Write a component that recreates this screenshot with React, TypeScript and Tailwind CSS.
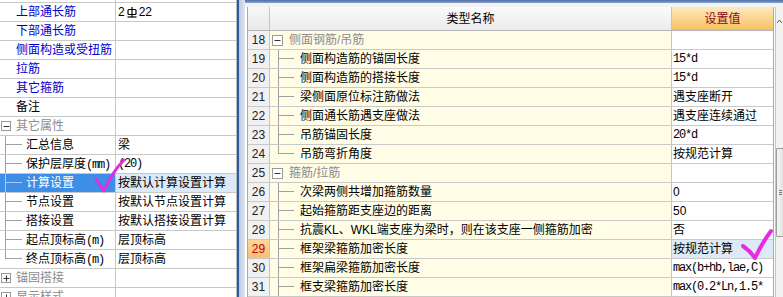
import React from 'react';

type LeftRow = {
  label: string;
  unit?: string;
  value?: string;
  kind: 'blue' | 'plain' | 'section' | 'child';
  open?: boolean;
  last?: boolean;
  selected?: boolean;
  rebar?: boolean;
};

type RightRow = {
  no: number;
  label: string;
  value?: string;
  mono?: boolean;
  section?: boolean;
  last?: boolean;
  selected?: boolean;
};

const leftRows: LeftRow[] = [
  { label: '上部通长筋', kind: 'blue', rebar: true },
  { label: '下部通长筋', kind: 'blue' },
  { label: '侧面构造或受扭筋', kind: 'blue' },
  { label: '拉筋', kind: 'blue' },
  { label: '其它箍筋', kind: 'blue' },
  { label: '备注', kind: 'plain' },
  { label: '其它属性', kind: 'section', open: true },
  { label: '汇总信息', value: '梁', kind: 'child' },
  { label: '保护层厚度', unit: '(mm)', value: '(20)', kind: 'child' },
  { label: '计算设置', value: '按默认计算设置计算', kind: 'child', selected: true },
  { label: '节点设置', value: '按默认节点设置计算', kind: 'child' },
  { label: '搭接设置', value: '按默认搭接设置计算', kind: 'child' },
  { label: '起点顶标高', unit: '(m)', value: '层顶标高', kind: 'child' },
  { label: '终点顶标高', unit: '(m)', value: '层顶标高', kind: 'child', last: true },
  { label: '锚固搭接', kind: 'section', open: false },
  { label: '显示样式', kind: 'section', open: false },
];

const rightRows: RightRow[] = [
  { no: 18, label: '侧面钢筋/吊筋', section: true },
  { no: 19, label: '侧面构造筋的锚固长度', value: '15*d', mono: true },
  { no: 20, label: '侧面构造筋的搭接长度', value: '15*d', mono: true },
  { no: 21, label: '梁侧面原位标注筋做法', value: '遇支座断开' },
  { no: 22, label: '侧面通长筋遇支座做法', value: '遇支座连续通过' },
  { no: 23, label: '吊筋锚固长度', value: '20*d', mono: true },
  { no: 24, label: '吊筋弯折角度', value: '按规范计算', last: true },
  { no: 25, label: '箍筋/拉筋', section: true },
  { no: 26, label: '次梁两侧共增加箍筋数量', value: '0' },
  { no: 27, label: '起始箍筋距支座边的距离', value: '50' },
  { no: 28, label: '抗震KL、WKL端支座为梁时，则在该支座一侧箍筋加密', value: '否' },
  { no: 29, label: '框架梁箍筋加密长度', value: '按规范计算', selected: true },
  { no: 30, label: '框架扁梁箍筋加密长度', value: 'max(b+hb,lae,C)', mono: true },
  { no: 31, label: '框支梁箍筋加密长度', value: 'max(0.2*Ln,1.5*', mono: true },
];

const mono = "font-['Liberation_Mono','Noto_Sans_CJK_SC',monospace] tracking-[-1.2px]";

const TreeBox = ({ open, size }: { open: boolean; size: string }) => (
  <span className={`${size} shrink-0 border border-[#9a9a9a] bg-white flex items-center justify-center`}>
    <svg width="7" height="7" viewBox="0 0 7 7">
      <line x1="0.5" y1="3.5" x2="6.5" y2="3.5" stroke="#333" strokeWidth="1" />
      {!open && <line x1="3.5" y1="0.5" x2="3.5" y2="6.5" stroke="#333" strokeWidth="1" />}
    </svg>
  </span>
);

const Connector = ({ last, width, light }: { last?: boolean; width: string; light?: boolean }) => {
  const c = light ? 'border-[#a9c9f2]' : 'border-[#a0a0a0]';
  return (
    <span className={`${width} self-stretch flex flex-col shrink-0`}>
      <span className={`h-[9px] border-l border-b ${c}`} />
      <span className={`flex-1 ${last ? '' : `border-l ${c}`}`} />
    </span>
  );
};

const RebarMark = () => (
  <svg width="10" height="12" viewBox="0 0 10 12" className="mx-[2px] inline-block">
    <line x1="5" y1="1" x2="5" y2="11" stroke="#000" strokeWidth="1.2" />
    <rect x="1" y="3.5" width="8" height="5" rx="1" fill="none" stroke="#000" strokeWidth="1.2" />
    <line x1="0.5" y1="11" x2="9.5" y2="11" stroke="#000" strokeWidth="1.2" />
  </svg>
);

function LeftPanel() {
  return (
    <div className="w-[237px] shrink-0 bg-white border-r border-[#b8b8b8] flex flex-col">
      <div className="h-[3px] border-b border-[#c8c8c8] flex shrink-0">
        <div className="w-[116px] border-r border-[#c8c8c8]" />
      </div>
      {leftRows.map((r) => {
        const labelColor =
          r.kind === 'blue' ? 'text-[#0000d0]' : r.kind === 'section' ? 'text-[#8c8c8c]' : 'text-black';
        return (
          <div key={r.label} className="h-[19px] shrink-0 flex border-b border-[#c8c8c8]">
            <div
              className={`w-[116px] shrink-0 flex items-center border-r border-[#c8c8c8] ${
                r.selected ? 'bg-[#3d8ee6]' : ''
              }`}
            >
              {r.kind === 'section' && (
                <>
                  <span className="ml-[1px]">
                    <TreeBox open={!!r.open} size="w-[10px] h-[10px]" />
                  </span>
                  <span className={`ml-[5px] ${labelColor}`}>{r.label}</span>
                </>
              )}
              {r.kind === 'child' && (
                <>
                  <span className="ml-[5px] self-stretch flex">
                    <Connector last={r.last} width="w-[17px]" light={r.selected} />
                  </span>
                  <span className={`ml-[4px] whitespace-nowrap ${r.selected ? 'text-white' : 'text-black'}`}>
                    {r.label}
                    {r.unit && <span className={mono}>{r.unit}</span>}
                  </span>
                </>
              )}
              {(r.kind === 'blue' || r.kind === 'plain') && (
                <span className={`ml-[16px] whitespace-nowrap ${labelColor}`}>{r.label}</span>
              )}
            </div>
            <div
              className={`flex-1 flex items-center pl-[2px] whitespace-nowrap overflow-hidden ${
                r.selected ? 'bg-[#dce9f8]' : ''
              }`}
            >
              {r.rebar ? (
                <span className="flex items-center">
                  2<RebarMark />22
                </span>
              ) : r.value === '(20)' ? (
                <span className={mono}>{r.value}</span>
              ) : (
                r.value
              )}
            </div>
          </div>
        );
      })}
    </div>
  );
}

function Scrollbar() {
  return (
    <div className="w-[8px] shrink-0 bg-[#f2f2f2] border-l border-[#c4c4c4] flex flex-col">
      <div className="h-[27px] flex items-center justify-end pr-[1px]">
        <svg width="5" height="4" viewBox="0 0 5 4">
          <path d="M0 4 L2.5 1 L5 4" fill="none" stroke="#555" strokeWidth="1" />
        </svg>
      </div>
      <div className="h-[114px]" />
      <div className="h-[89px] border border-r-0 border-[#9c9c9c] rounded-l-[2px] bg-gradient-to-r from-[#f6f6f6] to-[#e2e2e2] flex flex-col items-start justify-center pl-[2px] gap-[1px]">
        <span className="w-[3px] h-px bg-[#777]" />
        <span className="w-[3px] h-px bg-[#777]" />
        <span className="w-[3px] h-px bg-[#777]" />
      </div>
    </div>
  );
}

function RightPanel() {
  return (
    <div className="flex-1 flex min-w-0">
      <div className="w-[2px] bg-[#2f5c9e] shrink-0" />
      <div className="w-[6px] bg-gradient-to-r from-[#b9c8e0] to-[#dfe6f1] shrink-0" />
      <div className="flex-1 flex flex-col min-w-0">
        <div className="h-[3px] bg-gradient-to-b from-[#4f6fa6] to-[#8aa2c9] shrink-0" />
        <div className="h-[4px] bg-[#f3f3f3] shrink-0" />
        <div className="flex-1 flex min-h-0">
          <div className="w-[3px] bg-white border-r border-[#a8a8a8] shrink-0" />
          <div className="w-[525px] shrink-0 flex flex-col">
            <div className="h-[24px] shrink-0 flex border-b border-[#b4b4b4]">
              <div className="w-[22px] shrink-0 border-r border-[#c4c4c4] bg-gradient-to-b from-[#f8f8f8] to-[#e8e8e8]" />
              <div className="w-[402px] shrink-0 border-r border-[#c4c4c4] bg-gradient-to-b from-[#fbfbfb] to-[#ebebeb] flex items-center justify-center text-black">
                类型名称
              </div>
              <div className="flex-1 bg-gradient-to-b from-[#fde9bd] to-[#f6c15e] flex items-center justify-center text-[#8a0a1a]">
                设置值
              </div>
            </div>
            {rightRows.map((r) => (
              <div key={r.no} className="h-[19px] shrink-0 flex border-b border-[#c9c9c9]">
                <div
                  className={`w-[22px] shrink-0 border-r border-[#c4c4c4] flex items-center justify-center ${
                    r.selected ? 'bg-gradient-to-b from-[#fdd79a] to-[#f8bf72] text-[#c00000]' : 'bg-[#f1f1f1] text-[#222]'
                  }`}
                >
                  {r.no}
                </div>
                <div className="w-[402px] shrink-0 border-r border-[#c4c4c4] bg-[#fffde6] flex items-center whitespace-nowrap overflow-hidden">
                  {r.section ? (
                    <>
                      <span className="ml-[2px]">
                        <TreeBox open size="w-[11px] h-[11px]" />
                      </span>
                      <span className="ml-[6px] text-[#8c8c8c]">{r.label}</span>
                    </>
                  ) : (
                    <>
                      <span className="ml-[8px] self-stretch flex">
                        <Connector last={r.last} width="w-[16px]" />
                      </span>
                      <span className="ml-[6px] text-black">{r.label}</span>
                    </>
                  )}
                </div>
                <div
                  className={`flex-1 flex items-center pl-[1px] whitespace-nowrap overflow-hidden text-black ${
                    r.selected ? 'bg-[#dde9f7]' : 'bg-white'
                  }`}
                >
                  {r.value && <span className={r.mono ? mono : ''}>{r.value}</span>}
                </div>
              </div>
            ))}
          </div>
          <div className="w-[2px] shrink-0 border-l border-[#a8a8a8] bg-white" />
          <Scrollbar />
        </div>
      </div>
    </div>
  );
}

export default function App() {
  return (
    <div className="relative w-[783px] h-[297px] overflow-hidden flex bg-white text-[12px] leading-none font-['Liberation_Sans','Noto_Sans_CJK_SC',sans-serif]">
      <LeftPanel />
      <RightPanel />
      {/* hand-drawn check marks over the grid */}
      <svg
        className="absolute inset-0 pointer-events-none"
        width="783"
        height="297"
        viewBox="0 0 783 297"
      >
        <path
          d="M96 179 Q100 185 104 191 Q112 172 124 160"
          fill="none"
          stroke="#e22ee0"
          strokeWidth="3"
          strokeLinecap="round"
          strokeLinejoin="round"
        />
        <path
          d="M743 246 Q750 251 755 258 Q762 243 771 231"
          fill="none"
          stroke="#e22ee0"
          strokeWidth="4"
          strokeLinecap="round"
          strokeLinejoin="round"
        />
      </svg>
    </div>
  );
}
